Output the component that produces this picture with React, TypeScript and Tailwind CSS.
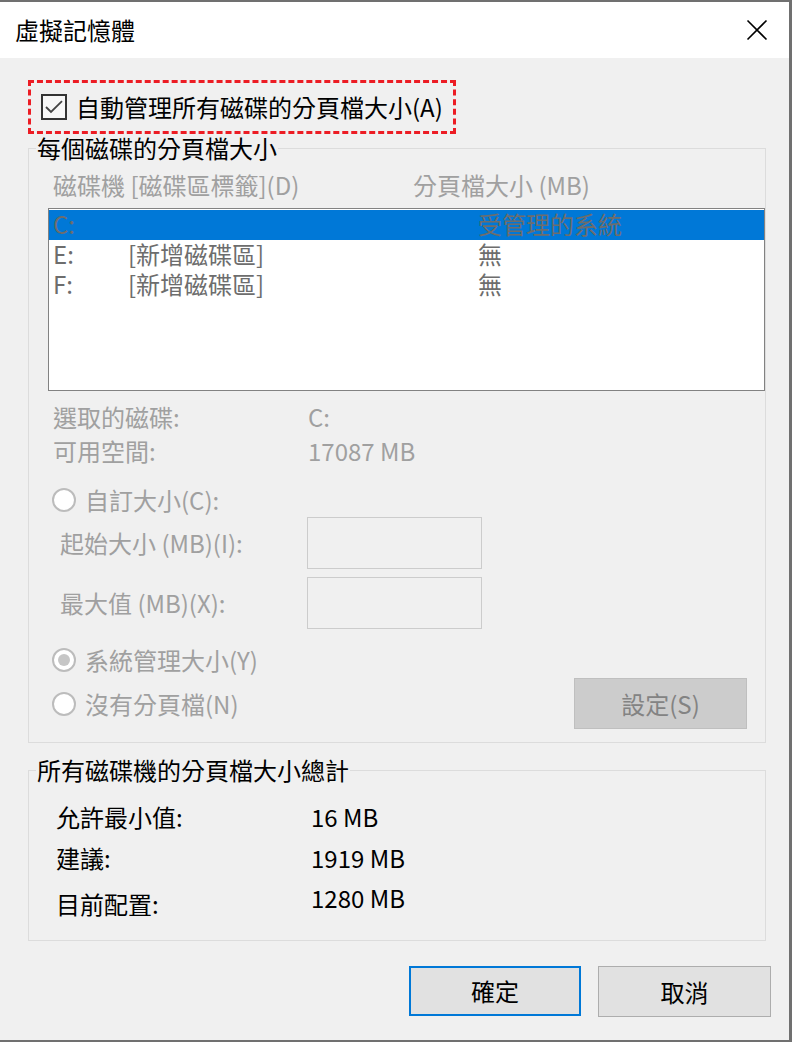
import React from 'react';

const font = { fontFamily: '"Noto Sans CJK TC", "Noto Sans", sans-serif' };

function Radio({ checked = false }: { checked?: boolean }) {
  return (
    <span className="w-[24px] h-[24px] rounded-full border-2 border-[#bcbcbc] bg-white flex items-center justify-center shrink-0">
      {checked && <span className="w-[12px] h-[12px] rounded-full bg-[#c6c6c6]" />}
    </span>
  );
}

export default function App() {
  const drives = [
    { d: 'C:', label: '', size: '受管理的系統', sel: true },
    { d: 'E:', label: '[新增磁碟區]', size: '無', sel: false },
    { d: 'F:', label: '[新增磁碟區]', size: '無', sel: false },
  ];

  return (
    <div
      className="w-[792px] h-[1042px] bg-[#f0f0f0] border-t-2 border-r-[3px] border-b-2 border-[#707070] flex flex-col text-[24px] text-black"
      style={font}
    >
      {/* Title bar */}
      <div className="h-[56px] bg-white flex items-center justify-between shrink-0">
        <span className="pl-[15px] leading-[30px]">虛擬記憶體</span>
        <svg width="22" height="22" viewBox="0 0 22 22" className="mr-[21px]">
          <path d="M1.5 1.5 L20.5 20.5 M20.5 1.5 L1.5 20.5" stroke="#000" strokeWidth="1.6" fill="none" />
        </svg>
      </div>

      <div className="flex flex-col pl-[28px] pr-[23px]">
        {/* Auto manage checkbox */}
        <div className="mt-[22px] w-[428px] h-[54px] border-[3px] border-dashed border-[#ec1c24] flex items-center pl-[10px]">
          <span className="w-[26px] h-[26px] border-2 border-[#333333] bg-[#f7f7f7] flex items-center justify-center shrink-0">
            <svg width="18" height="14" viewBox="0 0 18 14">
              <path d="M1 7 L6 12 L17 1.2" stroke="#444" strokeWidth="1.8" fill="none" />
            </svg>
          </span>
          <span className="ml-[9px] leading-[30px]">自動管理所有磁碟的分頁檔大小(A)</span>
        </div>

        {/* Per-drive group */}
        <fieldset className="mt-[1px] border border-[#dcdcdc] pb-[13px]">
          <legend className="ml-[7px] px-[1px] leading-[26px]">每個磁碟的分頁檔大小</legend>

          <div className="mt-[9px] pl-[24px] flex leading-[30px] text-[#a0a0a0]">
            <span className="w-[360px]">磁碟機 [磁碟區標籤](D)</span>
            <span>分頁檔大小 (MB)</span>
          </div>

          <div className="mt-[8px] ml-[19px] h-[183px] border border-[#828282] bg-white pt-[1px]">
            {drives.map((r) => (
              <div
                key={r.d}
                className={`h-[30px] flex items-center pl-[4px] text-[#6d6d6d] leading-[26px] ${r.sel ? 'bg-[#0078d7]' : ''}`}
              >
                <span className="w-[75px] -mt-[3px]">{r.d}</span>
                <span className="w-[350px] -mt-[3px]">{r.label}</span>
                <span className="-mt-[3px]">{r.size}</span>
              </div>
            ))}
          </div>

          <div className="mt-[9px] pl-[24px] text-[#a0a0a0]">
            <div className="h-[34px] flex items-center">
              <span className="w-[255px]">選取的磁碟:</span>
              <span>C:</span>
            </div>
            <div className="h-[34px] flex items-center">
              <span className="w-[255px]">可用空間:</span>
              <span>17087 MB</span>
            </div>
          </div>

          <div className="mt-[17px] pl-[23px] h-[30px] flex items-center gap-[9px] text-[#a0a0a0]">
            <Radio />
            <span>自訂大小(C):</span>
          </div>

          <div className="mt-[2px] pl-[31px] flex items-center text-[#a0a0a0]">
            <span className="w-[247px]">起始大小 (MB)(I):</span>
            <span className="w-[175px] h-[52px] border border-[#cccccc] bg-[#f0f0f0]" />
          </div>
          <div className="mt-[8px] pl-[31px] flex items-center text-[#a0a0a0]">
            <span className="w-[247px]">最大值 (MB)(X):</span>
            <span className="w-[175px] h-[52px] border border-[#cccccc] bg-[#f0f0f0]" />
          </div>

          <div className="mt-[16px] pl-[23px] h-[30px] flex items-center gap-[9px] text-[#a0a0a0]">
            <Radio checked />
            <span>系統管理大小(Y)</span>
          </div>

          <div className="mt-[3px] pl-[23px] pr-[18px] flex items-center justify-between text-[#a0a0a0]">
            <div className="flex items-center gap-[9px]">
              <Radio />
              <span>沒有分頁檔(N)</span>
            </div>
            <span className="w-[173px] h-[51px] bg-[#cccccc] border border-[#bfbfbf] flex items-center justify-center text-[#838383]">
              設定(S)
            </span>
          </div>
        </fieldset>

        {/* Totals group */}
        <fieldset className="mt-[14px] border border-[#dcdcdc] pb-[21px] pl-[27px]">
          <legend className="-ml-[20px] px-[1px] leading-[26px]">所有磁碟機的分頁檔大小總計</legend>
          <div className="mt-[19px] h-[30px] flex items-center">
            <span className="w-[255px]">允許最小值:</span>
            <span>16 MB</span>
          </div>
          <div className="mt-[11px] h-[30px] flex items-center">
            <span className="w-[255px]">建議:</span>
            <span>1919 MB</span>
          </div>
          <div className="mt-[10px] flex items-start leading-[30px]">
            <span className="w-[255px] pt-[6px]">目前配置:</span>
            <span>1280 MB</span>
          </div>
        </fieldset>

        {/* Dialog buttons */}
        <div className="mt-[25px] flex justify-end gap-[17px] -mr-[5px]">
          <button className="w-[172px] h-[50px] border-2 border-[#0078d7] bg-[#e1e1e1] flex items-center justify-center">
            確定
          </button>
          <button className="w-[173px] h-[51px] border border-[#adadad] bg-[#e1e1e1] flex items-center justify-center">
            取消
          </button>
        </div>
      </div>
    </div>
  );
}
